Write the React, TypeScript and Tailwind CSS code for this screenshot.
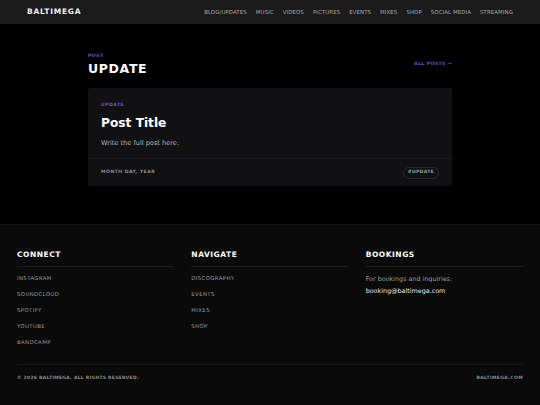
const nav = ['Blog/Updates', 'Music', 'Videos', 'Pictures', 'Events', 'Mixes', 'Shop', 'Social Media', 'Streaming'];
const connect = ['Instagram', 'SoundCloud', 'Spotify', 'YouTube', 'Bandcamp'];
const navigate = ['Discography', 'Events', 'Mixes', 'Shop'];

const font = { fontFamily: '"DejaVu Sans", "Noto Sans", sans-serif' };

function FooterHeading({ children }: { children: string }) {
  return (
    <div className="border-b border-[#1e1e1e] pb-[5px] mb-[8px]">
      <h3 className="text-[7.5px] font-bold tracking-[0.07em] text-white uppercase leading-[12px]">{children}</h3>
    </div>
  );
}

export default function App() {
  return (
    <div className="w-[540px] min-h-[405px] bg-black text-white" style={font}>
      <header className="h-[24px] bg-[#1b1b1b] flex items-center justify-between pl-[27px] pr-[27px]">
        <div className="text-[7.5px] font-bold tracking-[0.1em] text-[#f2f2f2]">BALTIMEGA</div>
        <nav className="flex items-center gap-[9px]">
          {nav.map((n) => (
            <span key={n} className="text-[5.4px] uppercase tracking-[0.02em] text-[#a8a8a8]">
              {n}
            </span>
          ))}
        </nav>
      </header>

      <main className="pt-[29px] pb-[38px]">
        <div className="w-[364px] mx-auto">
          <div className="flex items-end justify-between mb-[11px]">
            <div>
              <div className="text-[4.5px] font-bold tracking-[0.12em] text-[#6a52c9] leading-[6px]">POST</div>
              <h1 className="text-[12.5px] font-bold tracking-[0.05em] leading-[16px] mt-[2px]">UPDATE</h1>
            </div>
            <div className="text-[4.5px] font-bold tracking-[0.1em] text-[#6a52c9] mb-[9px]">ALL POSTS →</div>
          </div>

          <article className="bg-[#111114] rounded-[2px]">
            <div className="px-[13px] pt-[14px] pb-[10px]">
              <div className="text-[4.5px] font-bold tracking-[0.12em] text-[#6a52c9] leading-[6px]">UPDATE</div>
              <h2 className="text-[12.2px] font-bold leading-[16px] mt-[7px]">Post Title</h2>
              <p className="text-[6.6px] text-[#b5b5b5] mt-[8px] leading-[9px]">Write the full post here.</p>
            </div>
            <div className="border-t border-[#1d1d21] flex items-center justify-between pl-[13px] pr-[13px] h-[28px]">
              <span className="text-[4.6px] font-bold tracking-[0.1em] text-[#8e8e8e]">MONTH DAY, YEAR</span>
              <span className="text-[4.6px] font-bold tracking-[0.06em] text-[#9a9a9a] border border-[#2a2a2e] rounded-full px-[4px] h-[12px] flex items-center">
                #UPDATE
              </span>
            </div>
          </article>
        </div>
      </main>

      <footer className="bg-[#0a0a0a] border-t border-[#141414] px-[17px] pt-[24px]">
        <div className="grid grid-cols-3 gap-[17px]">
          <div>
            <FooterHeading>Connect</FooterHeading>
            <ul className="flex flex-col gap-[9.5px]">
              {connect.map((c) => (
                <li key={c} className="text-[5.3px] uppercase tracking-[0.08em] text-[#9c9c9c] leading-[6.5px]">{c}</li>
              ))}
            </ul>
          </div>
          <div>
            <FooterHeading>Navigate</FooterHeading>
            <ul className="flex flex-col gap-[9.5px]">
              {navigate.map((c) => (
                <li key={c} className="text-[5.3px] uppercase tracking-[0.08em] text-[#9c9c9c] leading-[6.5px]">{c}</li>
              ))}
            </ul>
          </div>
          <div>
            <FooterHeading>Bookings</FooterHeading>
            <p className="text-[6.4px] text-[#9c9c9c] leading-[8px]">For bookings and inquiries:</p>
            <p className="text-[6.4px] text-[#e8e8e8] leading-[8px] mt-[4px]">booking@baltimega.com</p>
          </div>
        </div>
        <div className="mt-[18px] border-t border-[#161616] flex items-center justify-between h-[29px]">
          <span className="text-[4.5px] font-bold tracking-[0.06em] text-[#8a8a8a]">© 2026 BALTIMEGA. ALL RIGHTS RESERVED.</span>
          <span className="text-[4.5px] font-bold tracking-[0.08em] text-[#8a8a8a]">BALTIMEGA.COM</span>
        </div>
        <div className="h-[14px]" />
      </footer>
    </div>
  );
}
